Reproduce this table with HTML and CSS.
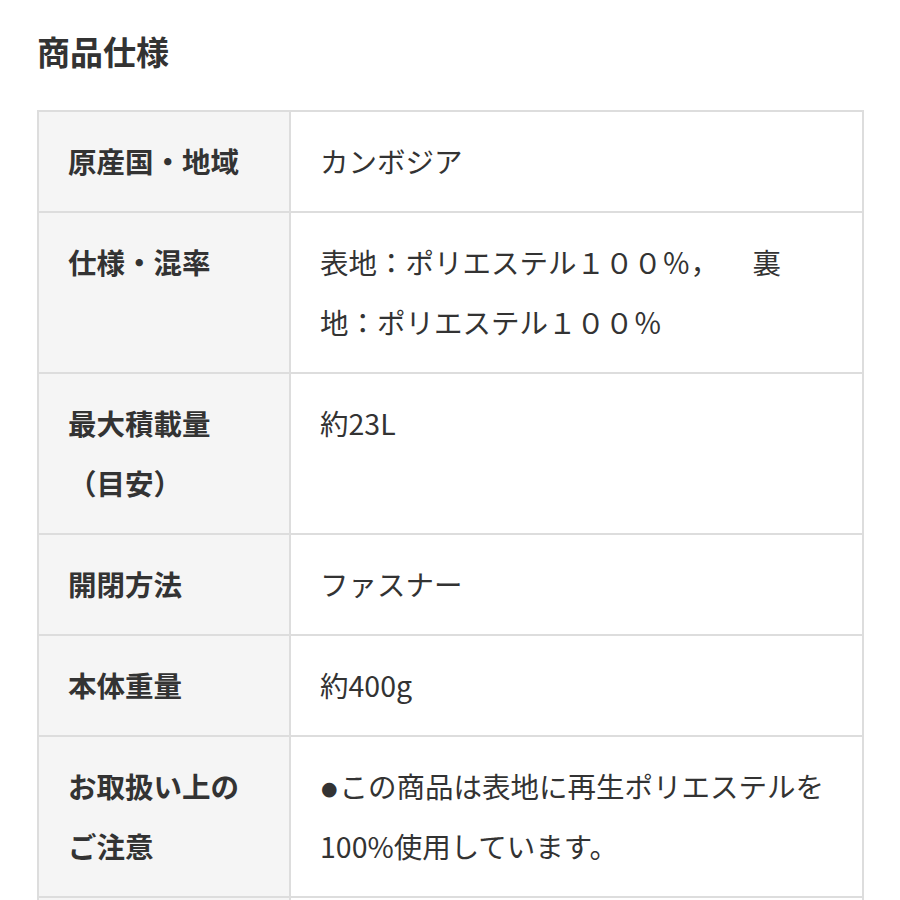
FILE: index.html
```html
<!DOCTYPE html>
<html lang="ja">
<head>
<meta charset="utf-8">
<title>商品仕様</title>
<link rel="stylesheet" href="styles.css">
</head>
<body>
<main class="page">
  <h1 class="title">商品仕様</h1>
  <dl class="spec">
    <dt class="label">原産国・地域</dt>
    <dd class="value">カンボジア</dd>
    <dt class="label">仕様・混率</dt>
    <dd class="value">表地：ポリエステル１００％，　&nbsp;&nbsp;&nbsp;裏<br>地：ポリエステル１００％</dd>
    <dt class="label">最大積載量（目安）</dt>
    <dd class="value">約23L</dd>
    <dt class="label">開閉方法</dt>
    <dd class="value">ファスナー</dd>
    <dt class="label">本体重量</dt>
    <dd class="value">約400g</dd>
    <dt class="label">お取扱い上のご注意</dt>
    <dd class="value"><span class="bullet">●</span>この商品は表地に再生ポリエステルを100%使用しています。</dd>
    <dt class="label">&nbsp;</dt>
    <dd class="value">&nbsp;</dd>
  </dl>
</main>
</body>
</html>
```

FILE: styles.css
```css
html, body {
  margin: 0;
  padding: 0;
  background: #ffffff;
}

body {
  font-family: "Noto Sans CJK JP", "Noto Sans", sans-serif;
  color: #333333;
}

.page {
  padding: 27px 36px 0 37px;
}

.title {
  margin: 0 0 35px;
  font-size: 33px;
  line-height: 48px;
  font-weight: 700;
  color: #333333;
}

.spec {
  margin: 0;
  display: grid;
  grid-template-columns: 252px 573px;
  border-top: 2px solid #dddddd;
  border-left: 2px solid #dddddd;
}

.label,
.value {
  margin: 0;
  padding: 19px 28px 20px 29px;
  font-size: 28.5px;
  line-height: 60px;
  border-right: 2px solid #dddddd;
  border-bottom: 2px solid #dddddd;
}

.label {
  background: #f5f5f5;
  font-weight: 700;
}

.value {
  background: #ffffff;
  font-weight: 400;
}

.bullet {
  display: inline-block;
  font-family: "DejaVu Sans", sans-serif;
  font-size: 19px;
  line-height: 1;
  margin-left: 1px;
  margin-right: 2px;
  vertical-align: 3px;
}
```
